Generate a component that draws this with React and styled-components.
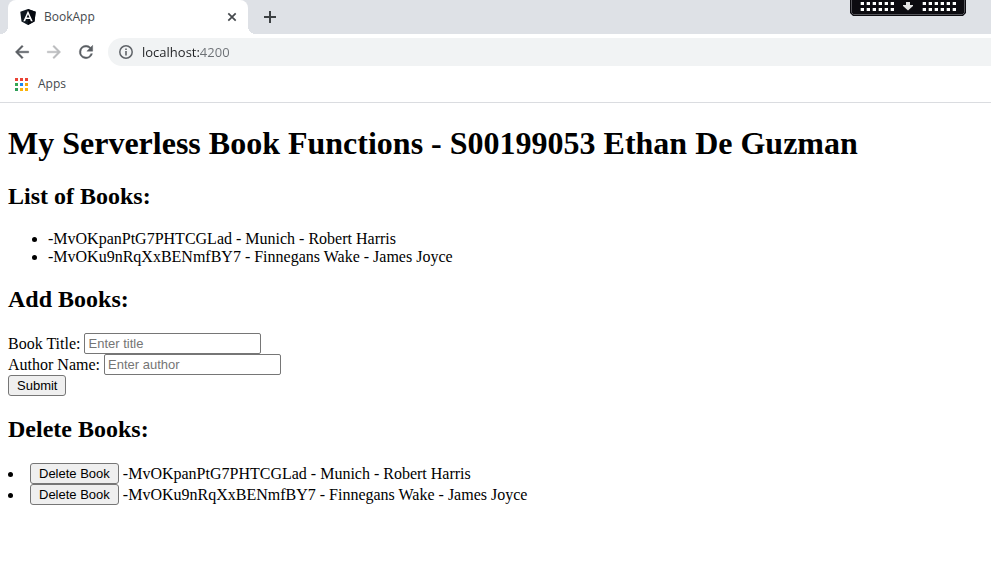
import React, { useState } from "react";
import styled, { createGlobalStyle } from "styled-components";

const GlobalStyle = createGlobalStyle`
  body {
    margin: 0;
    background: #fff;
    color: #000;
    font-family: "Liberation Serif", "Times New Roman", serif;
    font-size: 16px;
    line-height: 18px;
  }
`;

const Chrome = styled.header`
  font-family: "Open Sans", "Noto Sans", sans-serif;
  border-bottom: 1px solid #dadce0;
`;

const TabStrip = styled.div`
  position: relative;
  display: flex;
  align-items: center;
  height: 34px;
  padding-left: 8px;
  background: #dee1e6;
`;

const Tab = styled.div`
  position: relative;
  display: flex;
  align-items: center;
  box-sizing: border-box;
  width: 240px;
  height: 34px;
  padding: 0 8px 0 12px;
  gap: 8px;
  background: #fff;
  border-radius: 8px 8px 0 0;

  &::before,
  &::after {
    content: "";
    position: absolute;
    bottom: 0;
    width: 8px;
    height: 8px;
  }
  &::before {
    right: 100%;
    background: radial-gradient(circle at 0 0, #dee1e6 8px, #fff 8px);
  }
  &::after {
    left: 100%;
    background: radial-gradient(circle at 100% 0, #dee1e6 8px, #fff 8px);
  }
`;

const TabTitle = styled.span`
  flex: 1;
  font-size: 12px;
  color: #45494d;
`;

const IconButton = styled.button`
  display: flex;
  align-items: center;
  justify-content: center;
  width: ${(p) => p.$size}px;
  height: ${(p) => p.$size}px;
  padding: 0;
  border: 0;
  border-radius: 50%;
  background: transparent;
  color: ${(p) => (p.disabled ? "#babcbe" : "#5a5e63")};
`;

const NewTab = styled(IconButton)`
  margin-left: 8px;
  color: #3c4043;
`;

const Handle = styled.div`
  position: absolute;
  top: 0;
  right: 25px;
  display: flex;
`;

const Toolbar = styled.div`
  display: flex;
  align-items: center;
  height: 36px;
  padding-left: 6px;
`;

const AddressBar = styled.label`
  flex: 1;
  display: flex;
  align-items: center;
  height: 28px;
  margin-left: 6px;
  padding-left: 10px;
  gap: 8px;
  border-radius: 14px 0 0 14px;
  background: #f1f3f4;
  color: #5f6368;
`;

const AddressInput = styled.input`
  flex: 1;
  min-width: 0;
  padding: 0;
  border: 0;
  outline: 0;
  font-family: inherit;
  font-size: 13px;
  line-height: 20px;
  color: #202124;
  background: linear-gradient(to right, #202124 57px, #6b6f74 57px);
  background-clip: text;
  -webkit-text-fill-color: transparent;
`;

const Bookmarks = styled.nav`
  display: flex;
  align-items: center;
  height: 28px;
  padding: 0 0 4px 15px;
`;

const Bookmark = styled.a`
  display: flex;
  align-items: center;
  gap: 10px;
  font-size: 12px;
  color: #45494d;
  text-decoration: none;
`;

const Page = styled.main`
  display: flow-root;
  padding: 0 8px;
`;

const Title = styled.h1`
  margin: 21px 0;
  font-size: 32px;
  line-height: 38px;
`;

const Heading = styled.h2`
  margin: 20px 0;
  font-size: 24px;
  line-height: 27px;
`;

const BookList = styled.ul`
  margin: 0;
  padding-left: 40px;
`;

const DeleteList = styled.ul`
  margin: 0;
  padding: 0;
  list-style-position: inside;
`;

const DeleteRow = styled.li`
  line-height: 21px;
`;

const FieldRow = styled.div`
  display: flex;
  align-items: center;
  gap: 4px;
  line-height: 20px;
`;

const TextField = styled.input`
  box-sizing: border-box;
  width: 177px;
  height: 21px;
  padding: 1px 3px;
  border: 1px solid #767676;
  border-radius: 2px;
  font-family: "Liberation Sans", Arial, sans-serif;
  font-size: 13px;

  &::placeholder {
    color: #757575;
  }
`;

const PushButton = styled.button`
  display: inline-block;
  box-sizing: border-box;
  height: 21px;
  padding: 0 8px;
  border: 1px solid #767676;
  border-radius: 3px;
  background: #efefef;
  color: #000;
  font-family: "Liberation Sans", Arial, sans-serif;
  font-size: 13px;
  line-height: 19px;
  vertical-align: top;
`;

const AngularIcon = () => (
  <svg width="16" height="16" viewBox="0 0 16 16" aria-hidden="true">
    <path d="M8 0L15.7 2.7 14.5 12.5 8 16 1.5 12.5.3 2.7z" fill="#101820" />
    <path d="M8 0L15.7 2.7 14.5 12.5 8 16z" fill="#05080f" />
    <path
      d="M8 1.8L3.3 12.2h1.8l.9-2.3h4l.9 2.3h1.8zM8 5.2l1.4 3.3H6.6z"
      fill="#fff"
      fillRule="evenodd"
    />
  </svg>
);

const CloseIcon = () => (
  <svg width="16" height="16" viewBox="0 0 16 16" aria-hidden="true">
    <path d="M4.3 4.3l7.4 7.4M11.7 4.3l-7.4 7.4" stroke="#45494d" strokeWidth="1.7" />
  </svg>
);

const PlusIcon = () => (
  <svg width="16" height="16" viewBox="0 0 16 16" aria-hidden="true">
    <path d="M8 2v12M2 8h12" stroke="currentColor" strokeWidth="2" />
  </svg>
);

const shapes = {
  back: "M20 11H7.83l5.59-5.59L12 4l-8 8 8 8 1.41-1.41L7.83 13H20v-2z",
  forward: "M12 4l-1.41 1.41L16.17 11H4v2h12.17l-5.58 5.59L12 20l8-8z",
  reload:
    "M17.65 6.35A7.96 7.96 0 0 0 12 4a8 8 0 1 0 7.73 10h-2.08A6 6 0 1 1 12 6c1.66 0 3.14.69 4.22 1.78L13 11h7V4z",
};

const NavIcon = ({ name }) => (
  <svg width="20" height="20" viewBox="0 0 24 24" aria-hidden="true">
    <path d={shapes[name]} fill="currentColor" stroke="currentColor" strokeWidth="0.5" />
  </svg>
);

const InfoIcon = () => (
  <svg width="16" height="16" viewBox="0 0 16 16" aria-hidden="true">
    <circle cx="8" cy="8" r="6.2" fill="none" stroke="currentColor" strokeWidth="1.5" />
    <path d="M7.2 7h1.6v4.4H7.2zM7.2 4.5h1.6V6H7.2z" fill="currentColor" />
  </svg>
);

const appDots = [
  "#ea4335", "#ea4335", "#ea4335",
  "#34a853", "#1a86f0", "#f5a60b",
  "#2f9e58", "#fbb30a", "#fbb30a",
];

const AppsIcon = () => (
  <svg width="13" height="13" viewBox="0 0 13 13" shapeRendering="crispEdges" aria-hidden="true">
    {appDots.map((fill, i) => (
      <rect key={i} x={(i % 3) * 5} y={Math.floor(i / 3) * 5} width="3" height="3" fill={fill} />
    ))}
  </svg>
);

const dotColumns = [0, 1, 2, 3, 4, 5];

const HandleIcon = () => (
  <svg width="116" height="16" viewBox="0 0 116 16" aria-hidden="true">
    <path d="M0 0h116v13l-3 3H3l-3-3z" fill="#0c0b10" />
    <path d="M1.5 0v12.5l2 2h109l2-2V0" fill="none" stroke="#55555a" />
    {[11, 73].map((start) =>
      dotColumns.map((c) =>
        [2, 8].map((y) => (
          <g key={`${start}-${c}-${y}`}>
            <rect x={start + c * 6 - 1} y={y} width="1" height="3" fill="#55595a" />
            <rect x={start + c * 6} y={y} width="3" height="3" fill="#fff" />
          </g>
        ))
      )
    )}
    <path d="M56 2h4v3h3v1l-5 4.500-5-4.500V5h3z" fill="#e4e4e4" />
  </svg>
);

const initialBooks = [
  { id: "-MvOKpanPtG7PHTCGLad", title: "Munich", author: "Robert Harris" },
  { id: "-MvOKu9nRqXxBENmfBY7", title: "Finnegans Wake", author: "James Joyce" },
];

const describe = (book) => `${book.id} - ${book.title} - ${book.author}`;

export default function App() {
  const [books, setBooks] = useState(initialBooks);
  const [title, setTitle] = useState("");
  const [author, setAuthor] = useState("");

  const addBook = (event) => {
    event.preventDefault();
    if (!title || !author) return;
    setBooks([...books, { id: `-${Date.now()}`, title, author }]);
    setTitle("");
    setAuthor("");
  };

  return (
    <>
      <GlobalStyle />
      <Chrome>
        <TabStrip>
          <Tab>
            <AngularIcon />
            <TabTitle>BookApp</TabTitle>
            <IconButton $size={16} aria-label="Close tab">
              <CloseIcon />
            </IconButton>
          </Tab>
          <NewTab $size={28} aria-label="New tab">
            <PlusIcon />
          </NewTab>
          <Handle>
            <HandleIcon />
          </Handle>
        </TabStrip>
        <Toolbar>
          <IconButton $size={32} aria-label="Back">
            <NavIcon name="back" />
          </IconButton>
          <IconButton $size={32} aria-label="Forward" disabled>
            <NavIcon name="forward" />
          </IconButton>
          <IconButton $size={32} aria-label="Reload">
            <NavIcon name="reload" />
          </IconButton>
          <AddressBar>
            <InfoIcon />
            <AddressInput aria-label="Address" defaultValue="localhost:4200" />
          </AddressBar>
        </Toolbar>
        <Bookmarks>
          <Bookmark href="#apps">
            <AppsIcon />
            Apps
          </Bookmark>
        </Bookmarks>
      </Chrome>

      <Page>
        <Title>My Serverless Book Functions - S00199053 Ethan De Guzman</Title>

        <Heading>List of Books:</Heading>
        <BookList>
          {books.map((book) => (
            <li key={book.id}>{describe(book)}</li>
          ))}
        </BookList>

        <Heading>Add Books:</Heading>
        <form onSubmit={addBook}>
          <FieldRow>
            <label htmlFor="title">Book Title:</label>
            <TextField
              id="title"
              placeholder="Enter title"
              value={title}
              onChange={(e) => setTitle(e.target.value)}
            />
          </FieldRow>
          <FieldRow>
            <label htmlFor="author">Author Name:</label>
            <TextField
              id="author"
              placeholder="Enter author"
              value={author}
              onChange={(e) => setAuthor(e.target.value)}
            />
          </FieldRow>
          <PushButton type="submit">Submit</PushButton>
        </form>

        <Heading>Delete Books:</Heading>
        <DeleteList>
          {books.map((book) => (
            <DeleteRow key={book.id}>
              <PushButton
                type="button"
                onClick={() => setBooks(books.filter((b) => b.id !== book.id))}
              >
                Delete Book
              </PushButton>{" "}
              {describe(book)}
            </DeleteRow>
          ))}
        </DeleteList>
      </Page>
    </>
  );
}
